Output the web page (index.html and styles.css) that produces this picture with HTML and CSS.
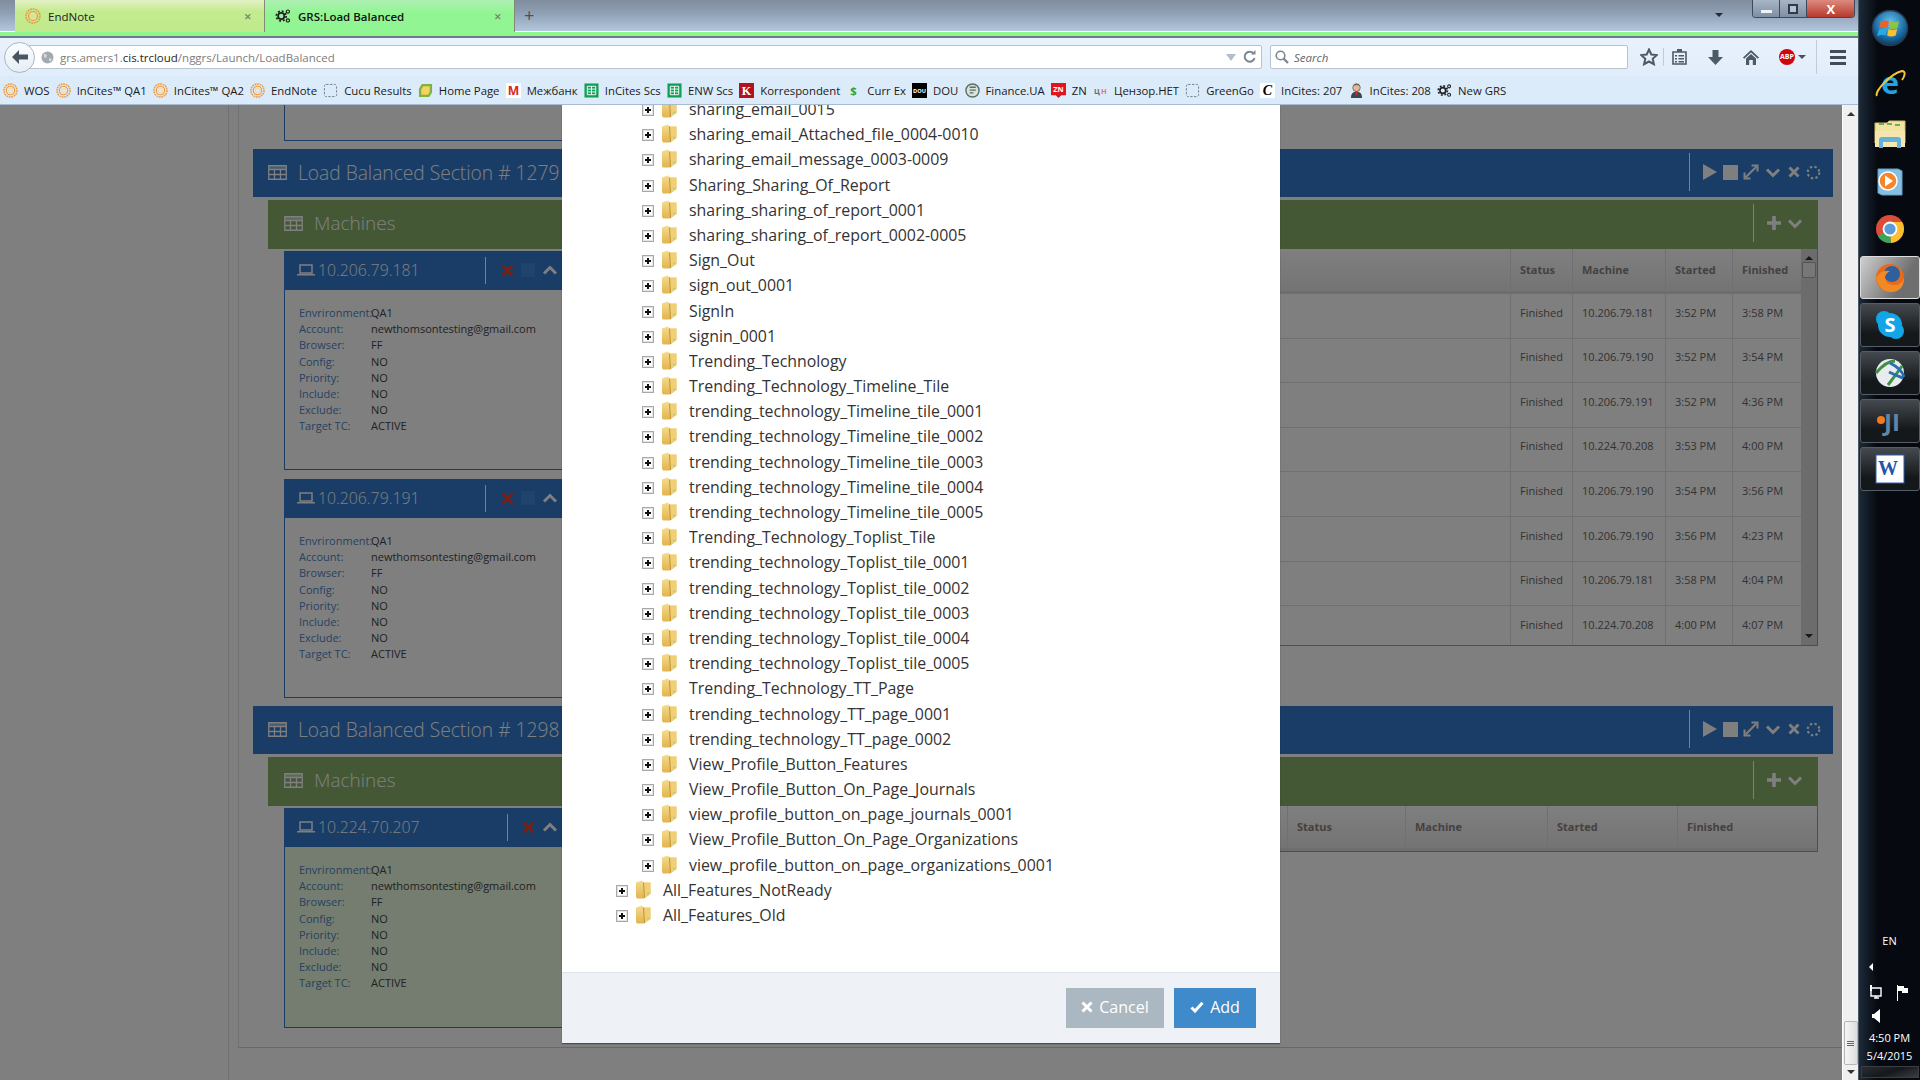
FILE: index.html
```html
<!DOCTYPE html>
<html lang="en">
<head>
<meta charset="utf-8">
<title>GRS:Load Balanced</title>
<link rel="stylesheet" href="styles.css">
</head>
<body>
<svg class="defs" width="0" height="0" aria-hidden="true">
  <defs>
    <linearGradient id="fold" x1="0" y1="0" x2="0" y2="1"><stop offset="0" stop-color="#f5dc8e"/><stop offset="1" stop-color="#e2b44e"/></linearGradient>
    <radialGradient id="orb" cx=".5" cy=".35" r=".7"><stop offset="0" stop-color="#6fc3ee"/><stop offset=".6" stop-color="#1b6ea8"/><stop offset="1" stop-color="#0a2c4a"/></radialGradient>
    <symbol id="folder" viewBox="0 0 16 19"><path d="M1 2.500 7 .5 8.500 2.500H15.500V14L9 18.500H2L1 17Z" fill="url(#fold)"/><path d="M8.500 2.500 9.500 18 15.500 14V2.500Z" fill="#f0cf78"/><path d="M8.500 2.500 9.500 18" stroke="#c2922f" stroke-width="1" fill="none"/><circle cx="13" cy="13.500" r="1" fill="#9ecf8a"/></symbol>
    <symbol id="ring" viewBox="0 0 16 16"><g fill="none" stroke="#ee9a3c"><circle cx="8" cy="8" r="7" stroke-width="1.500" stroke-dasharray="2 .7"/><circle cx="8" cy="8" r="4.500" stroke-width="1.200"/><circle cx="8" cy="8" r="2.300" stroke="#f8d8a8" stroke-width="1.200"/></g></symbol>
    <symbol id="blank" viewBox="0 0 16 16"><rect x="1.500" y="1.500" width="13" height="13" rx="2" fill="none" stroke="#6f7a85" stroke-dasharray="2.500 1.500"/></symbol>
    <symbol id="sheet" viewBox="0 0 16 16"><rect x=".5" y=".5" width="15" height="15" fill="#0f9d58"/><path d="M3.500 3.500h9v9h-9zM3.500 6.500h9M3.500 9.500h9M8 3.500v9" fill="none" stroke="#fff"/></symbol>
    <symbol id="gears" viewBox="0 0 18 18"><g fill="none" stroke="#222"><circle cx="7" cy="9" r="3.500" stroke-width="2"/><circle cx="7" cy="9" r="5.500" stroke-width="2" stroke-dasharray="2.200 2.100"/><circle cx="14.500" cy="4" r="1.800" stroke-width="1.300"/><circle cx="14.500" cy="14" r="1.800" stroke-width="1.300"/></g></symbol>
    <symbol id="tbl" viewBox="0 0 19 15"><path d="M.75.75h17.500v13.500H.75zM.75 4.500h17.500M.75 9.500h17.500M6.500 4.500v9.500M12.500 4.500v9.500" fill="none" stroke="currentColor" stroke-width="1.300"/><path d="M1 1h17v3H1z" fill="currentColor" opacity=".45"/></symbol>
    <symbol id="laptop" viewBox="0 0 18 12"><path d="M3 1h12v8H3z" fill="none" stroke="currentColor" stroke-width="1.500"/><path d="M0 10h18v1.500H0z" fill="currentColor"/></symbol>
    <symbol id="down" viewBox="0 0 16 11"><path d="M2 2.500 8 8.500 14 2.500" fill="none" stroke="currentColor" stroke-width="3"/></symbol>
    <symbol id="up" viewBox="0 0 16 11"><path d="M2 8.500 8 2.500 14 8.500" fill="none" stroke="currentColor" stroke-width="3"/></symbol>
    <symbol id="cross" viewBox="0 0 12 12"><path d="M1.500 1.500 10.500 10.500M10.500 1.500 1.500 10.500" fill="none" stroke="currentColor" stroke-width="2.900"/></symbol>
    <symbol id="play" viewBox="0 0 14 16"><path d="M0 0 14 8 0 16Z" fill="currentColor"/></symbol>
    <symbol id="expand" viewBox="0 0 16 16"><path d="M3 13 13 3M8.500 1.500H14.500V7.500M1.500 8.500V14.500H7.500" fill="none" stroke="currentColor" stroke-width="2"/></symbol>
    <symbol id="spin" viewBox="0 0 15 15"><circle cx="7.500" cy="7.500" r="5.800" fill="none" stroke="currentColor" stroke-width="2.200" stroke-dasharray="2.300 2.300"/></symbol>
    <symbol id="plus" viewBox="0 0 14 14"><path d="M7 0v14M0 7h14" stroke="currentColor" stroke-width="3.600" fill="none"/></symbol>
  </defs>
</svg>

<div class="desktop">
  <div class="browser">
    <div class="tabstrip">
      <div class="tab tab-other">
        <svg class="tab-ico"><use href="#ring"/></svg><span class="tab-label">EndNote</span><span class="tab-close">&#10005;</span>
      </div>
      <div class="tab tab-active">
        <svg class="tab-ico"><use href="#gears"/></svg><span class="tab-label tab-label-on">GRS:Load Balanced</span><span class="tab-close">&#10005;</span>
      </div>
      <span class="tab-new">+</span>
      <span class="tab-caret"></span>
      <div class="winbtns">
        <span class="wb wb-min"><i class="wb-dash"></i></span>
        <span class="wb wb-max"><i class="wb-sq"></i></span>
        <span class="wb wb-close">X</span>
      </div>
    </div>
    <div class="greenline"></div>

    <div class="navbar">
      <div class="back"><svg width="16" height="14" viewBox="0 0 16 14"><path d="M7 0 0 7l7 7V9.500h9v-5H7Z" fill="#4a5563"/></svg></div>
      <div class="url">
        <svg class="globe" width="13" height="13" viewBox="0 0 13 13"><circle cx="6.500" cy="6.500" r="6" fill="#a3a9b0"/><path d="M3 2.500 6 4 5 7 3 6ZM8 7l3 1-2 3-1-2Z" fill="#d7dade"/></svg>
        <span class="url-text">grs.amers1.<b>cis.trcloud</b>/nggrs/Launch/LoadBalanced</span>
        <span class="url-drop"></span>
        <svg class="url-reload" width="13" height="14" viewBox="0 0 13 14"><path d="M10.500 3.500A5 5 0 1 0 11.500 8" fill="none" stroke="#7b8794" stroke-width="2"/><path d="M8 4.500h4.500V0Z" fill="#7b8794"/></svg>
      </div>
      <div class="search">
        <svg width="14" height="14" viewBox="0 0 14 14"><circle cx="5.500" cy="5.500" r="4.300" fill="none" stroke="#7d8894" stroke-width="1.600"/><path d="M8.500 8.500 13 13" stroke="#7d8894" stroke-width="2.400"/></svg>
        <span>Search</span>
      </div>
      <svg class="t-star" width="18" height="18" viewBox="0 0 18 18"><path d="M9 1.500 11.300 6.500 16.800 7.100 12.700 10.800 13.900 16.200 9 13.500 4.100 16.200 5.300 10.800 1.200 7.100 6.700 6.500Z" fill="none" stroke="#4d5a68" stroke-width="2"/></svg>
      <i class="t-sep"></i>
      <svg class="t-list" width="15" height="16" viewBox="0 0 15 16"><path d="M1 3h13v12H1z" fill="none" stroke="#4d5a68" stroke-width="1.600"/><path d="M5 0h5v3H5zM3 6h2v1.500H3zM3 9h2v1.500H3zM3 12h2v1.500H3zM6.500 6H12v1.500H6.500zM6.500 9H12v1.500H6.500zM6.500 12H12v1.500H6.500z" fill="#4d5a68"/></svg>
      <svg class="t-dl" width="15" height="15" viewBox="0 0 15 15"><path d="M4.500 0h6v7H15L7.500 15 0 7h4.500Z" fill="#4d5a68"/></svg>
      <svg class="t-home" width="16" height="15" viewBox="0 0 16 15"><path d="M8 0 16 7.500 14.800 8.800 8 2.500 1.200 8.800 0 7.500Z" fill="#4d5a68"/><path d="M3 8.500 8 4l5 4.500V15H9.800V10H6.200V15H3Z" fill="#4d5a68"/></svg>
      <span class="t-abp">ABP</span>
      <span class="t-caret"></span>
      <i class="t-sep t-sep2"></i>
      <div class="t-menu"><i></i><i></i><i></i></div>
    </div>

    <div class="bookmarks">
      <a class="bm"><svg class="bm-ico"><use href="#ring"/></svg><span>WOS</span></a>
      <a class="bm"><svg class="bm-ico"><use href="#ring"/></svg><span>InCites™ QA1</span></a>
      <a class="bm"><svg class="bm-ico"><use href="#ring"/></svg><span>InCites™ QA2</span></a>
      <a class="bm"><svg class="bm-ico"><use href="#ring"/></svg><span>EndNote</span></a>
      <a class="bm"><svg class="bm-ico"><use href="#blank"/></svg><span>Cucu Results</span></a>
      <a class="bm"><svg class="bm-ico" viewBox="0 0 16 16"><path d="M4 1h11v9l-3 5H1V6Z" fill="#7cb342"/><path d="M5.500 3.500h7v6l-2 3h-7V7Z" fill="#f4d35e"/></svg><span>Home Page</span></a>
      <a class="bm"><svg class="bm-ico" viewBox="0 0 16 16"><rect width="16" height="16" fill="#fff"/><text x="8" y="13" text-anchor="middle" class="glyph-m">M</text></svg><span>Межбанк</span></a>
      <a class="bm"><svg class="bm-ico"><use href="#sheet"/></svg><span>InCites Scs</span></a>
      <a class="bm"><svg class="bm-ico"><use href="#sheet"/></svg><span>ENW Scs</span></a>
      <a class="bm"><svg class="bm-ico" viewBox="0 0 16 16"><rect width="16" height="16" fill="#b3141b"/><text x="8" y="13" text-anchor="middle" class="glyph-k">K</text></svg><span>Korrespondent</span></a>
      <a class="bm"><svg class="bm-ico" viewBox="0 0 16 16"><text x="8" y="12.500" text-anchor="middle" class="glyph-d">$</text></svg><span>Curr Ex</span></a>
      <a class="bm"><svg class="bm-ico" viewBox="0 0 16 16"><rect width="16" height="16" fill="#000"/><text x="8" y="10.500" text-anchor="middle" class="glyph-dou">DOU</text></svg><span>DOU</span></a>
      <a class="bm"><svg class="bm-ico" viewBox="0 0 16 16"><circle cx="8" cy="8" r="7" fill="#d8e3dc" stroke="#5b6e66" stroke-width="1.500"/><path d="M5 4.500h6.500M5 7.500h6.500M5 10.500h4" stroke="#5b6e66" stroke-width="1.400"/></svg><span>Finance.UA</span></a>
      <a class="bm"><svg class="bm-ico" viewBox="0 0 16 16"><path d="M0 0h16v13h-5l-3 3-3-3H0Z" fill="#e3141e"/><text x="8" y="10" text-anchor="middle" class="glyph-zn">ZN</text></svg><span>ZN</span></a>
      <a class="bm"><svg class="bm-ico" viewBox="0 0 16 16"><text x="1" y="12" class="glyph-c1">Ц</text><text x="8.500" y="12" class="glyph-c2">Н</text></svg><span>Цензор.НЕТ</span></a>
      <a class="bm"><svg class="bm-ico"><use href="#blank"/></svg><span>GreenGo</span></a>
      <a class="bm"><svg class="bm-ico" viewBox="0 0 16 16"><rect width="16" height="16" fill="#fff"/><text x="8" y="13" text-anchor="middle" class="glyph-cc">C</text></svg><span>InCites: 207</span></a>
      <a class="bm"><svg class="bm-ico" viewBox="0 0 16 16"><circle cx="8" cy="5" r="4" fill="#e4b795" stroke="#555" stroke-width=".8"/><path d="M4 3.500 6 .8h4l2 2.700-2-1H6Z" fill="#666"/><path d="M2 16q0-7 6-7t6 7Z" fill="#3d4550"/><path d="M7 9h2v4H7z" fill="#c9302c"/></svg><span>InCites: 208</span></a>
      <a class="bm"><svg class="bm-ico bm-wide"><use href="#gears"/></svg><span>New GRS</span></a>
    </div>

    <div class="viewport">
      <div class="page">
        <aside class="sidebar"></aside>
        <main class="main">
          <div class="content">
            <div class="frag"></div>

            <section class="lb">
              <header class="lb-head">
                <svg class="ico-tbl"><use href="#tbl"/></svg>
                <h2 class="lb-title">Load Balanced Section # 1279</h2>
                <div class="lb-tools">
                  <svg class="i-play"><use href="#play"/></svg><i class="i-stop"></i><svg class="i-exp"><use href="#expand"/></svg><svg class="i-chev"><use href="#down"/></svg><svg class="i-x"><use href="#cross"/></svg><svg class="i-spin"><use href="#spin"/></svg>
                </div>
              </header>
              <div class="mach-head">
                <svg class="ico-tbl"><use href="#tbl"/></svg>
                <h3 class="mach-title">Machines</h3>
                <div class="mach-tools"><svg class="i-plus"><use href="#plus"/></svg><svg class="i-chev"><use href="#down"/></svg></div>
              </div>
              <div class="mach-body">
                <div class="cards">
                  <article class="card">
                    <header class="card-head">
                      <svg class="i-lap"><use href="#laptop"/></svg><span class="card-ip">10.206.79.181</span>
                      <div class="card-tools"><svg class="i-red"><use href="#cross"/></svg><i class="i-sq"></i><svg class="i-up"><use href="#up"/></svg></div>
                    </header>
                    <dl class="info"><dt>Envrironment:</dt><dd>QA1</dd><dt>Account:</dt><dd>newthomsontesting@gmail.com</dd><dt>Browser:</dt><dd>FF</dd><dt>Config:</dt><dd>NO</dd><dt>Priority:</dt><dd>NO</dd><dt>Include:</dt><dd>NO</dd><dt>Exclude:</dt><dd>NO</dd><dt>Target TC:</dt><dd>ACTIVE</dd></dl>
                  </article>
                  <article class="card">
                    <header class="card-head">
                      <svg class="i-lap"><use href="#laptop"/></svg><span class="card-ip">10.206.79.191</span>
                      <div class="card-tools"><svg class="i-red"><use href="#cross"/></svg><i class="i-sq"></i><svg class="i-up"><use href="#up"/></svg></div>
                    </header>
                    <dl class="info"><dt>Envrironment:</dt><dd>QA1</dd><dt>Account:</dt><dd>newthomsontesting@gmail.com</dd><dt>Browser:</dt><dd>FF</dd><dt>Config:</dt><dd>NO</dd><dt>Priority:</dt><dd>NO</dd><dt>Include:</dt><dd>NO</dd><dt>Exclude:</dt><dd>NO</dd><dt>Target TC:</dt><dd>ACTIVE</dd></dl>
                  </article>
                </div>
                <div class="runs runs-long">
                  <div class="runs-table">
                    <div class="r r-h r-long"><span></span><span>Status</span><span>Machine</span><span>Started</span><span>Finished</span></div>
                    <div class="r r-long"><span></span><span>Finished</span><span>10.206.79.181</span><span>3:52 PM</span><span>3:58 PM</span></div>
                    <div class="r r-long"><span></span><span>Finished</span><span>10.206.79.190</span><span>3:52 PM</span><span>3:54 PM</span></div>
                    <div class="r r-long"><span></span><span>Finished</span><span>10.206.79.191</span><span>3:52 PM</span><span>4:36 PM</span></div>
                    <div class="r r-long"><span></span><span>Finished</span><span>10.224.70.208</span><span>3:53 PM</span><span>4:00 PM</span></div>
                    <div class="r r-long"><span></span><span>Finished</span><span>10.206.79.190</span><span>3:54 PM</span><span>3:56 PM</span></div>
                    <div class="r r-long"><span></span><span>Finished</span><span>10.206.79.190</span><span>3:56 PM</span><span>4:23 PM</span></div>
                    <div class="r r-long"><span></span><span>Finished</span><span>10.206.79.181</span><span>3:58 PM</span><span>4:04 PM</span></div>
                    <div class="r r-long"><span></span><span>Finished</span><span>10.224.70.208</span><span>4:00 PM</span><span>4:07 PM</span></div>
                  </div>
                  <div class="runs-scroll"><i class="ar-up"></i><i class="runs-thumb"></i><i class="ar-dn"></i></div>
                </div>
              </div>
            </section>

            <section class="lb">
              <header class="lb-head">
                <svg class="ico-tbl"><use href="#tbl"/></svg>
                <h2 class="lb-title">Load Balanced Section # 1298</h2>
                <div class="lb-tools">
                  <svg class="i-play"><use href="#play"/></svg><i class="i-stop"></i><svg class="i-exp"><use href="#expand"/></svg><svg class="i-chev"><use href="#down"/></svg><svg class="i-x"><use href="#cross"/></svg><svg class="i-spin"><use href="#spin"/></svg>
                </div>
              </header>
              <div class="mach-head">
                <svg class="ico-tbl"><use href="#tbl"/></svg>
                <h3 class="mach-title">Machines</h3>
                <div class="mach-tools"><svg class="i-plus"><use href="#plus"/></svg><svg class="i-chev"><use href="#down"/></svg></div>
              </div>
              <div class="mach-body">
                <div class="cards">
                  <article class="card card-ok">
                    <header class="card-head">
                      <svg class="i-lap"><use href="#laptop"/></svg><span class="card-ip">10.224.70.207</span>
                      <div class="card-tools card-tools-s"><svg class="i-red"><use href="#cross"/></svg><svg class="i-up"><use href="#up"/></svg></div>
                    </header>
                    <dl class="info"><dt>Envrironment:</dt><dd>QA1</dd><dt>Account:</dt><dd>newthomsontesting@gmail.com</dd><dt>Browser:</dt><dd>FF</dd><dt>Config:</dt><dd>NO</dd><dt>Priority:</dt><dd>NO</dd><dt>Include:</dt><dd>NO</dd><dt>Exclude:</dt><dd>NO</dd><dt>Target TC:</dt><dd>ACTIVE</dd></dl>
                  </article>
                </div>
                <div class="runs runs-empty">
                  <div class="runs-table">
                    <div class="r r-h r-empty"><span></span><span>Status</span><span>Machine</span><span>Started</span><span>Finished</span></div>
                  </div>
                </div>
              </div>
            </section>
          </div>
        </main>

        <div class="dim"></div>

        <div class="modal">
          <div class="tree">
            <div class="row l2"><i class="ex"></i><svg class="fd"><use href="#folder"/></svg><span>sharing_email_0015</span></div>
            <div class="row l2"><i class="ex"></i><svg class="fd"><use href="#folder"/></svg><span>sharing_email_Attached_file_0004-0010</span></div>
            <div class="row l2"><i class="ex"></i><svg class="fd"><use href="#folder"/></svg><span>sharing_email_message_0003-0009</span></div>
            <div class="row l2"><i class="ex"></i><svg class="fd"><use href="#folder"/></svg><span>Sharing_Sharing_Of_Report</span></div>
            <div class="row l2"><i class="ex"></i><svg class="fd"><use href="#folder"/></svg><span>sharing_sharing_of_report_0001</span></div>
            <div class="row l2"><i class="ex"></i><svg class="fd"><use href="#folder"/></svg><span>sharing_sharing_of_report_0002-0005</span></div>
            <div class="row l2"><i class="ex"></i><svg class="fd"><use href="#folder"/></svg><span>Sign_Out</span></div>
            <div class="row l2"><i class="ex"></i><svg class="fd"><use href="#folder"/></svg><span>sign_out_0001</span></div>
            <div class="row l2"><i class="ex"></i><svg class="fd"><use href="#folder"/></svg><span>SignIn</span></div>
            <div class="row l2"><i class="ex"></i><svg class="fd"><use href="#folder"/></svg><span>signin_0001</span></div>
            <div class="row l2"><i class="ex"></i><svg class="fd"><use href="#folder"/></svg><span>Trending_Technology</span></div>
            <div class="row l2"><i class="ex"></i><svg class="fd"><use href="#folder"/></svg><span>Trending_Technology_Timeline_Tile</span></div>
            <div class="row l2"><i class="ex"></i><svg class="fd"><use href="#folder"/></svg><span>trending_technology_Timeline_tile_0001</span></div>
            <div class="row l2"><i class="ex"></i><svg class="fd"><use href="#folder"/></svg><span>trending_technology_Timeline_tile_0002</span></div>
            <div class="row l2"><i class="ex"></i><svg class="fd"><use href="#folder"/></svg><span>trending_technology_Timeline_tile_0003</span></div>
            <div class="row l2"><i class="ex"></i><svg class="fd"><use href="#folder"/></svg><span>trending_technology_Timeline_tile_0004</span></div>
            <div class="row l2"><i class="ex"></i><svg class="fd"><use href="#folder"/></svg><span>trending_technology_Timeline_tile_0005</span></div>
            <div class="row l2"><i class="ex"></i><svg class="fd"><use href="#folder"/></svg><span>Trending_Technology_Toplist_Tile</span></div>
            <div class="row l2"><i class="ex"></i><svg class="fd"><use href="#folder"/></svg><span>trending_technology_Toplist_tile_0001</span></div>
            <div class="row l2"><i class="ex"></i><svg class="fd"><use href="#folder"/></svg><span>trending_technology_Toplist_tile_0002</span></div>
            <div class="row l2"><i class="ex"></i><svg class="fd"><use href="#folder"/></svg><span>trending_technology_Toplist_tile_0003</span></div>
            <div class="row l2"><i class="ex"></i><svg class="fd"><use href="#folder"/></svg><span>trending_technology_Toplist_tile_0004</span></div>
            <div class="row l2"><i class="ex"></i><svg class="fd"><use href="#folder"/></svg><span>trending_technology_Toplist_tile_0005</span></div>
            <div class="row l2"><i class="ex"></i><svg class="fd"><use href="#folder"/></svg><span>Trending_Technology_TT_Page</span></div>
            <div class="row l2"><i class="ex"></i><svg class="fd"><use href="#folder"/></svg><span>trending_technology_TT_page_0001</span></div>
            <div class="row l2"><i class="ex"></i><svg class="fd"><use href="#folder"/></svg><span>trending_technology_TT_page_0002</span></div>
            <div class="row l2"><i class="ex"></i><svg class="fd"><use href="#folder"/></svg><span>View_Profile_Button_Features</span></div>
            <div class="row l2"><i class="ex"></i><svg class="fd"><use href="#folder"/></svg><span>View_Profile_Button_On_Page_Journals</span></div>
            <div class="row l2"><i class="ex"></i><svg class="fd"><use href="#folder"/></svg><span>view_profile_button_on_page_journals_0001</span></div>
            <div class="row l2"><i class="ex"></i><svg class="fd"><use href="#folder"/></svg><span>View_Profile_Button_On_Page_Organizations</span></div>
            <div class="row l2"><i class="ex"></i><svg class="fd"><use href="#folder"/></svg><span>view_profile_button_on_page_organizations_0001</span></div>
            <div class="row l1"><i class="ex"></i><svg class="fd"><use href="#folder"/></svg><span>All_Features_NotReady</span></div>
            <div class="row l1"><i class="ex"></i><svg class="fd"><use href="#folder"/></svg><span>All_Features_Old</span></div>
          </div>
          <footer class="modal-foot">
            <button class="btn btn-cancel"><svg class="btn-x"><use href="#cross"/></svg>Cancel</button>
            <button class="btn btn-add"><svg class="btn-ok" viewBox="0 0 14 12"><path d="M1.500 6.500 5 10 12.500 1.800" fill="none" stroke="#fff" stroke-width="3"/></svg>Add</button>
          </footer>
        </div>
      </div>
      <div class="vscroll">
        <i class="ar-up"></i>
        <div class="vspace"></div>
        <div class="vthumb"><i></i><i></i><i></i></div>
        <i class="ar-dn"></i>
      </div>
    </div>
  </div>

  <nav class="taskbar">
    <svg class="tk tk-start" viewBox="0 0 40 40"><circle cx="20" cy="20" r="18.500" fill="url(#orb)" stroke="#2a3a4a" stroke-width="1.500"/><path d="M10 14q4-3 9-1l-1.500 7q-5-2-9 1Z" fill="#e8622a"/><path d="M20.500 13q4 2 9 0l-1.500 7q-5 2-9 0Z" fill="#8cc63f"/><path d="M8 22q4-3 9-1l-1.500 7q-5-2-9 1Z" fill="#27a9e1"/><path d="M18.500 21q4 2 9 0l-1.500 7q-5 2-9 0Z" fill="#fbc02d"/></svg>
    <svg class="tk tk-ie" viewBox="0 0 32 32"><text x="16" y="25" text-anchor="middle" class="glyph-ie">e</text><path d="M3 27C0 23 16 5 28 2c4 0 3 5 0 9" fill="none" stroke="#f6c62a" stroke-width="2"/></svg>
    <svg class="tk tk-ex" viewBox="0 0 32 30"><path d="M1 4h12l2-2h16v22H1Z" fill="#f3e3a2" stroke="#d0b96c"/><path d="M5 4h5v2H5zM13 4h5v2h-5zM21 5h5v2h-5z" fill="#6fae5a"/><path d="M1 12h30v16H1Z" fill="#f5e6ad"/><path d="M5 29V21q0-3 3-3h16q3 0 3 3v8h-4v-6H9v6Z" fill="#62b2dd"/></svg>
    <svg class="tk tk-wm" viewBox="0 0 28 28"><path d="M2 1h20l4 2v24H6l-4-2Z" fill="#87bfe0" stroke="#5e9ec9"/><circle cx="12" cy="13" r="9" fill="#f4852a" stroke="#fff" stroke-width="1.500"/><path d="M9 7.500 17 13l-8 5.500Z" fill="#fff"/></svg>
    <svg class="tk tk-ch" viewBox="0 0 30 30"><circle cx="15" cy="15" r="14" fill="#dd4b39"/><path d="M15 15 2.900 22A14 14 0 0 0 15 29h1Z" fill="#3ba55c"/><path d="M15 8H27.100A14 14 0 0 1 16 29Z" fill="#fbc02d"/><circle cx="15" cy="15" r="6.500" fill="#5a9bd8" stroke="#fff" stroke-width="1.800"/></svg>
    <div class="tile tile-on"><svg class="tk-in" viewBox="0 0 30 30"><circle cx="15" cy="15" r="14" fill="#ea6a1c"/><circle cx="17" cy="11" r="8" fill="#2e5f9e"/><path d="M1 15q3 14 16 14 12-1 12-14-3 8-11 7-8-1-8-8 1-4 5-6Q6 6 1 15Z" fill="#f08a24"/></svg></div>
    <div class="tile"><svg class="tk-in" viewBox="0 0 30 30"><circle cx="9" cy="9" r="8" fill="#12a5e8"/><circle cx="21" cy="21" r="8" fill="#12a5e8"/><circle cx="15" cy="15" r="12" fill="#12a5e8"/><text x="15" y="22" text-anchor="middle" class="glyph-s">S</text></svg></div>
    <div class="tile"><svg class="tk-in" viewBox="0 0 30 30"><circle cx="15" cy="15" r="14" fill="#e8ecef"/><path d="M1 15q10-12 19-12M27 8q-7 10-14 19" fill="none" stroke="#3f8f45" stroke-width="3"/><path d="M15 5q12 6 14 14M14 14q8 4 14 6" fill="none" stroke="#2b6fb0" stroke-width="3"/></svg></div>
    <div class="tile"><svg class="tk-in" viewBox="0 0 30 30"><circle cx="6" cy="14" r="4" fill="#f27a1a"/><text x="17" y="25" text-anchor="middle" class="glyph-ji">JI</text></svg></div>
    <div class="tile"><svg class="tk-in" viewBox="0 0 30 30"><rect x="1" y="1" width="28" height="28" fill="#fff" stroke="#2b5fb0"/><text x="13" y="21" text-anchor="middle" class="glyph-w">W</text></svg></div>
    <div class="tk-fill"></div>
    <div class="tray-en">EN</div>
    <i class="tray-arrow"></i>
    <div class="tray-ico">
      <svg width="14" height="16" viewBox="0 0 14 16"><path d="M2 3h10v8H2zM5 13h5M7 11v2" fill="none" stroke="#fff" stroke-width="1.400"/><path d="M1 0h2v6H1z" fill="#fff"/></svg>
      <svg width="14" height="16" viewBox="0 0 14 16"><path d="M1 0h1v16H1zM2 1h6v2h4v5H6V6H2z" fill="#fff"/></svg>
    </div>
    <svg class="tray-vol" width="8" height="14" viewBox="0 0 8 14"><path d="M0 5h2l6-5v14L2 9H0Z" fill="#fff"/></svg>
    <div class="tray-time">4:50 PM</div>
    <div class="tray-date">5/4/2015</div>
    <div class="tray-show"></div>
  </nav>
</div>
</body>
</html>
```

FILE: styles.css
```css
* { box-sizing: border-box; }
html, body { margin: 0; height: 100%; overflow: hidden; }
body { font-family: "Open Sans", "Noto Sans", sans-serif; font-size: 11px; color: #333; }
.defs { position: absolute; }
i { display: block; font-style: normal; }
h2, h3, dl, dt, dd { margin: 0; font-weight: normal; }
svg { display: block; flex: none; }

.desktop { display: flex; width: 1920px; height: 1080px; }
.browser { width: 1858px; display: flex; flex-direction: column; }

/* tab strip */
.tabstrip { height: 32px; display: flex; padding-left: 15px; background: linear-gradient(#7f8d9e, #8e9fb3 40%, #b2c6dc); border-bottom: 1px solid #fff; }
.tab { height: 32px; display: flex; align-items: center; padding-left: 10px; position: relative; z-index: 1; border-right: 1px solid #7f8b77; }
.tab-other { width: 250px; background: linear-gradient(#e3f1c4, #c4eb90 35%, #c0ea8c); }
.tab-active { width: 250px; background: linear-gradient(#aef0b4, #92f594 40%); }
.tab-ico { width: 16px; height: 16px; margin-right: 7px; }
.tab-label { font: 11.5px "Open Sans", sans-serif; color: #222; }
.tab-label-on { font-weight: 600; color: #111; }
.tab-close { margin-left: auto; margin-right: 12px; color: #7a8a6c; font-size: 9px; font-weight: bold; }
.tab-new { margin-left: 9px; font-size: 18px; line-height: 30px; color: #46525e; }
.tab-caret { margin: 13px 0 0 1181px; width: 0; height: 0; border: 4px solid transparent; border-top: 4px solid #222b36; border-bottom: 0; }
.winbtns { margin-left: 29px; height: 18px; display: flex; border: 1px solid #3c4a5c; border-top: 0; border-radius: 0 0 4px 4px; overflow: hidden; }
.wb { display: flex; align-items: center; justify-content: center; }
.wb-min, .wb-max { width: 27px; background: linear-gradient(#a8b6c6, #7f8fa2); border-right: 1px solid #3c4a5c; }
.wb-close { width: 47px; background: linear-gradient(#dc8a7e, #b8392c); color: #fff; font-size: 13px; font-weight: bold; }
.wb-dash { width: 11px; height: 3px; background: #eef2f6; margin-top: 6px; }
.wb-sq { width: 10px; height: 10px; border: 2px solid #2f3b49; background: #b6c3d2; }
.greenline { height: 6px; background: #8ef58f; border-bottom: 2px solid #6d7c8c; position: relative; z-index: 1; }

/* nav */
.navbar { height: 38px; display: flex; align-items: center; padding-left: 4px; background: linear-gradient(#e9f2fc, #e1edfa); }
.back { width: 31px; height: 31px; border-radius: 50%; background: linear-gradient(#fbfdff, #e6eef6); border: 1px solid #a9b6c4; display: flex; align-items: center; justify-content: center; z-index: 1; }
.url { width: 1234px; height: 24px; margin-left: -7px; background: #fff; border: 1px solid #b6c3d1; border-radius: 0 2px 2px 0; display: flex; align-items: center; padding-left: 12px; }
.globe { margin-right: 6px; }
.url-text { font-size: 11.5px; color: #7d7d7d; }
.url-text b { font-weight: 400; color: #1e1e1e; }
.url-drop { margin-left: auto; margin-right: 7px; width: 0; height: 0; border: 5px solid transparent; border-top: 7px solid #b4bec8; border-bottom: 0; }
.url-reload { margin-right: 5px; }
.search { width: 358px; height: 24px; margin-left: 8px; background: #fff; border: 1px solid #b6c3d1; border-radius: 2px; display: flex; align-items: center; padding-left: 4px; gap: 5px; color: #666; font-style: italic; font-size: 11.5px; }
.t-star { margin-left: 12px; }
.t-sep { width: 1px; height: 18px; background: #c0cbd8; margin-left: 5px; }
.t-list { margin-left: 8px; }
.t-dl { margin-left: 21px; }
.t-home { margin-left: 20px; }
.t-abp { margin-left: 20px; width: 16px; height: 16px; border-radius: 50%; background: #d0060e; color: #fff; font-size: 7px; font-weight: 700; line-height: 16px; text-align: center; }
.t-caret { margin-left: 3px; width: 0; height: 0; border: 4px solid transparent; border-top: 4px solid #47525e; border-bottom: 0; }
.t-sep2 { height: 34px; margin-left: 10px; }
.t-menu { margin-left: 13px; width: 16px; display: flex; flex-direction: column; gap: 3px; }
.t-menu i { height: 3px; background: #404c59; }

/* bookmarks */
.bookmarks { height: 29px; display: flex; align-items: center; padding: 1px 0 0 3px; background: #dcebf9; border-bottom: 1px solid #a9bccf; }
.bm { display: flex; align-items: center; gap: 6px; margin-right: 6.15px; font-size: 11.35px; color: #1a1a1a; white-space: nowrap; }
.bm-ico { width: 15px; height: 15px; }
.glyph-m { font: 700 13px "Open Sans", sans-serif; fill: #d8261c; }
.glyph-k { font: 700 13px "Liberation Serif", serif; fill: #fff; }
.glyph-d { font: 700 12px "Open Sans", sans-serif; fill: #2fa32f; }
.glyph-dou { font: 700 6px "Open Sans", sans-serif; fill: #fff; }
.glyph-zn { font: 700 8px "Open Sans", sans-serif; fill: #fff; }
.glyph-c1 { font: 700 8px "Open Sans", sans-serif; fill: #6b6b6b; }
.glyph-c2 { font: 700 8px "Open Sans", sans-serif; fill: #e07b6a; }
.glyph-cc { font: italic 700 15px "Liberation Serif", serif; fill: #000; }
.glyph-ie { font: 700 30px "Open Sans", sans-serif; fill: #1ea4e3; }
.glyph-s { font: 700 20px "Open Sans", sans-serif; fill: #fff; }
.glyph-ji { font: 700 24px "Open Sans", sans-serif; fill: #5d86a8; }
.glyph-w { font: 700 20px "Liberation Serif", serif; fill: #1f56a8; }

/* viewport */
.viewport { flex: 1; display: flex; min-height: 0; }
.page { width: 1842px; position: relative; overflow: hidden; display: flex; background: #fff; }
.sidebar { width: 229px; border-right: 1px solid #e2e2e2; }
.main { width: 1613px; padding: 0 0 0 9px; }
.content { border-left: 1px solid #e2e2e2; border-bottom: 1px solid #d0d0d0; padding: 0 9px 19px 14px; }
.frag { width: 400px; height: 36px; margin: 0 0 8px 31px; border: 1px solid #327acc; border-top: 0; }

.lb + .lb { margin-top: 8px; }
.lb-head { height: 48px; background: #327acc; color: #fff; display: flex; align-items: center; padding: 0 0 2px 15px; }
.ico-tbl { width: 19px; height: 15px; color: #fff; }
.lb-title { margin-left: 11px; font-size: 19.2px; font-weight: 300; }
.lb-tools { margin-left: auto; width: 144px; height: 38px; border-left: 1px solid #fff; display: flex; align-items: center; padding-left: 13px; color: #fff; }
.i-play { width: 14px; height: 16px; }
.i-stop { width: 15px; height: 15px; background: #fff; margin-left: 6px; }
.i-exp { width: 16px; height: 16px; margin-left: 5px; }
.i-chev { width: 16px; height: 11px; margin-left: 6px; }
.lb-tools .i-x { width: 12px; height: 12px; margin-left: 7px; }
.i-spin { width: 15px; height: 15px; margin-left: 6px; }

.mach-head { height: 49px; margin: 3px 15px 0 15px; background: #88b06c; color: #fff; display: flex; align-items: center; padding: 0 0 3px 16px; }
.mach-title { margin-left: 11px; font-size: 19px; font-weight: 300; }
.mach-tools { margin-left: auto; width: 65px; height: 38px; border-left: 1px solid #fff; display: flex; align-items: center; padding-left: 13px; }
.i-plus { width: 14px; height: 14px; }
.mach-tools .i-chev { margin-left: 6px; }

.mach-body { margin: 0 15px; display: flex; align-items: flex-start; }
.cards { width: 312px; padding: 2px 0 0 16px; flex: none; display: flex; flex-direction: column; gap: 9px; }
.card { height: 219px; border: 1px solid #327acc; border-top: 0; }
.card-ok { height: 220px; background: #e8fade; }
.card-head { height: 39px; margin: 0 -1px; background: #327acc; color: #fff; display: flex; align-items: center; padding: 0 0 1px 13px; }
.i-lap { width: 18px; height: 12px; margin-right: 3px; }
.card-ip { font-size: 15.8px; font-weight: 300; }
.card-tools { margin-left: auto; width: 95px; height: 27px; border-left: 1px solid #fff; display: flex; align-items: center; padding-left: 15px; }
.card-tools-s { width: 73px; padding-left: 14px; }
.i-red { width: 13px; height: 13px; color: #f04030; }
.i-sq { width: 14px; height: 14px; background: #3c86d8; margin-left: 7px; }
.i-up { width: 16px; height: 11px; margin-left: 7px; }
.card-tools-s .i-up { margin-left: 7px; }
.info { display: grid; grid-template-columns: 72px 1fr; grid-auto-rows: 16.2px; padding: 15px 0 0 14px; font-size: 11px; line-height: 16px; }
.info dt { color: #4f84c4; white-space: nowrap; }
.info dd { color: #444; }

/* runs tables */
.runs { flex: 1; min-width: 0; border-right: 1px solid #88b06c; border-bottom: 1px solid #88b06c; display: flex; }
.runs-long { height: 397px; }
.runs-empty { height: 46px; }
.runs-table { flex: 1; min-width: 0; overflow: hidden; }
.r { display: grid; height: 44.6px; border-bottom: 1px solid #e0e0e0; }
.r-long { grid-template-columns: 930px 62px 93px 67px 1fr; }
.r-empty { grid-template-columns: 707px 118px 142px 130px 1fr; border-bottom: 0; }
.r span { border-left: 1px solid #e0e0e0; padding: 10.6px 0 0 9px; color: #666; line-height: 16px; white-space: nowrap; }
.r span:first-child { border-left: 0; }
.r-h { height: 45px; background: linear-gradient(#fff, #e8e8e8); border-bottom: 3px solid #dcdcdc; }
.r-h span { color: #8a8282; font-weight: 700; padding-top: 13px; }
.runs-scroll { width: 16px; background: #d8d8d8; display: flex; flex-direction: column; align-items: center; }
.runs-thumb { width: 14px; height: 16px; margin-top: 2px; background: #eee; border: 1px solid #aaa; border-radius: 2px; }
.runs-scroll .ar-dn { margin-top: auto; margin-bottom: 7px; }
.ar-up { width: 0; height: 0; border: 4px solid transparent; border-bottom: 4px solid #333; border-top: 0; margin-top: 7px; flex: none; }
.ar-dn { width: 0; height: 0; border: 4px solid transparent; border-top: 4px solid #333; border-bottom: 0; flex: none; }

.dim { position: absolute; inset: 0; background: rgba(0, 0, 0, .5); }

/* modal */
.modal { position: absolute; left: 562px; top: 0; width: 718px; height: 938px; background: #fff; display: flex; flex-direction: column; box-shadow: 0 1px 1px rgba(0, 0, 0, .4); }
.tree { flex: 1; min-height: 0; overflow: hidden; }
.row { height: 25.19px; display: flex; align-items: center; font-size: 15.9px; color: #333; white-space: nowrap; }
.row:first-child { margin-top: -7.6px; }
.row span { margin-top: -2px; }
.l2 { padding-left: 80px; }
.l1 { padding-left: 54px; }
.ex { width: 12px; height: 12px; border: 1px solid #a8a8a8; background: #fff; box-shadow: inset 0 0 0 1px #e4e4e4; margin-right: 7px; position: relative; flex: none; }
.ex::before { content: ""; position: absolute; left: 2px; right: 2px; top: 4px; height: 2px; background: #111; }
.ex::after { content: ""; position: absolute; top: 2px; bottom: 2px; left: 4px; width: 2px; background: #111; }
.fd { width: 16px; height: 19px; margin-right: 12px; margin-top: -3px; }
.modal-foot { height: 71px; flex: none; background: #eef1f5; border-top: 1px solid #e1e5ea; display: flex; justify-content: flex-end; gap: 10px; padding: 15px 24px 0 0; }
.btn { height: 40px; border: 0; color: #fff; font: 16px "Open Sans", sans-serif; display: flex; align-items: center; justify-content: center; gap: 6px; padding: 0 0 2px; }
.btn-cancel { width: 98px; background: #abb8c1; }
.btn-add { width: 82px; background: #3f8aca; }
.btn-x { width: 12px; height: 12px; color: #fff; }
.btn-ok { width: 14px; height: 12px; }

/* page scrollbar */
.vscroll { width: 16px; background: #f0f0f0; border-left: 1px solid #fff; display: flex; flex-direction: column; align-items: center; }
.vspace { flex: 1; }
.vthumb { width: 14px; height: 44px; margin-bottom: 5px; background: linear-gradient(90deg, #f6f6f6, #dcdcdc); border: 1px solid #b5b5b5; border-radius: 2px; display: flex; flex-direction: column; justify-content: center; gap: 1px; align-items: center; }
.vthumb i { width: 7px; height: 1px; background: #666; }
.vscroll .ar-dn { margin-bottom: 6px; }

/* taskbar */
.taskbar { width: 62px; border-left: 1px solid #4b5866; background: linear-gradient(90deg, #1c2a38, #060a10 30%); display: flex; flex-direction: column; align-items: center; color: #fff; }
.tk { flex: none; }
.tk-start { width: 38px; height: 38px; margin-top: 9px; }
.tk-ie { width: 32px; height: 32px; margin-top: 22px; }
.tk-ex { width: 32px; height: 30px; margin-top: 18px; }
.tk-wm { width: 28px; height: 28px; margin-top: 19px; }
.tk-ch { width: 30px; height: 30px; margin-top: 18px; }
.tile { width: 60px; height: 44px; margin-top: 4px; border: 1px solid #555e66; border-radius: 3px; background: linear-gradient(#444a4f, #15181b 70%); display: flex; align-items: center; justify-content: center; flex: none; }
.tile-on { margin-top: 12px; height: 43px; background: linear-gradient(120deg, #cfcfcf, #6f6f6f 70%); border-color: #ddd; }
.tk-in { width: 30px; height: 30px; }
.tk-fill { flex: 1; }
.tray-en { font-size: 11px; line-height: 16px; }
.tray-arrow { width: 0; height: 0; border: 4px solid transparent; border-right: 4px solid #fff; border-left: 0; align-self: flex-start; margin: 14px 0 0 10px; }
.tray-ico { display: flex; gap: 13px; margin-top: 14px; }
.tray-vol { align-self: flex-start; margin: 8px 0 0 13px; }
.tray-time { font-size: 11px; line-height: 16px; margin-top: 7px; }
.tray-date { font-size: 11px; line-height: 16px; margin-top: 2px; }
.tray-show { width: 58px; height: 12px; margin: 2px 0; background: linear-gradient(160deg, #2a2e32, #15181b 50%, #3a3e42); border: 1px solid #3a3e42; flex: none; }
```
